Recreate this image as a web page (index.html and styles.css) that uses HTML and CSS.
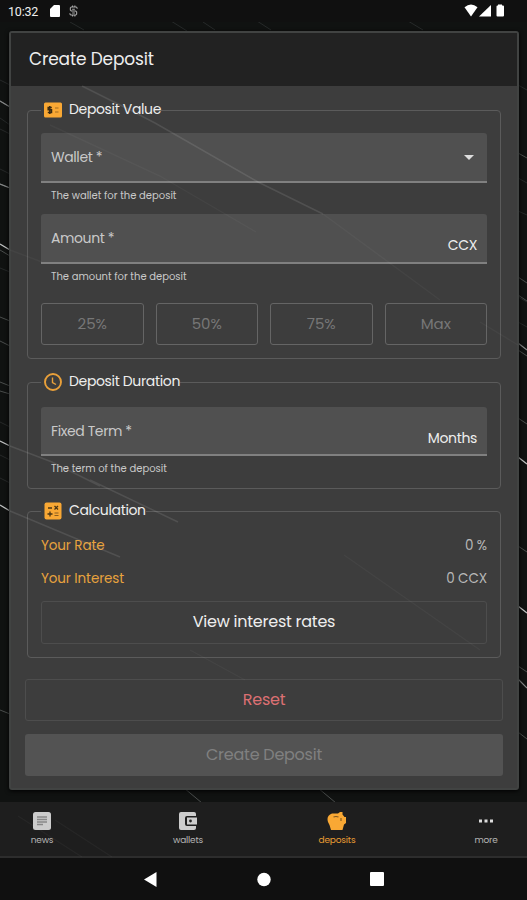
FILE: index.html
```html
<!DOCTYPE html>
<html lang="en">
<head>
    <meta charset="UTF-8">
    <meta name="viewport" content="width=device-width, initial-scale=1.0">
    <title>Create Deposit</title>
    <link rel="stylesheet" href="styles.css">
</head>
<body>
    <div class="screen">
        <!-- Background streaks -->
        <svg class="streaks" viewBox="0 0 527 900" fill="none" stroke="#4a4d4c">
            <path stroke="#262929" d="M70 22l14 8M171 21l16 10M203 22l12 8M257 21l14 9M408 21l15 9M0 80l10 5M0 118l10 7M0 129l10 5M0 169l10 5M0 268l10 4M0 422l10 5M0 455l10 5M0 478l10 5M518 85l9 5M518 178l9 5M518 211l9 4M518 297l9 5M518 322l9 5"/>
            <path d="M0 101l10 6M0 184l10 4M0 250l10 6M0 317l10 4M0 341l10 5M0 382l10 4M0 391l10 3M0 710l10 4M518 153l9 5M518 277l9 6M518 295l9 6M518 350l9 6M518 418l9 6M518 546l9 6M518 666l9 6M518 732l9 7M184 788l18 15M318 788l18 15"/>
            <path stroke="#c0c2c2" stroke-width="1.3" d="M0 244l10 6M0 441l10 5M0 505l10 6M518 457l9 7M518 606l9 7"/>
            <path stroke="#858787" stroke-width="1.2" d="M0 184l10 4M0 101l10 6M518 343l9 7M518 679l9 9"/>
        </svg>

        <div class="status-bar">
            <span class="clock">10:32</span>
            <svg class="sd-icon" viewBox="0 0 10 12"><path d="M4 0h5q1 0 1 1v10q0 1-1 1H1q-1 0-1-1V4z" fill="#fff"/></svg>
            <svg class="s-icon" viewBox="0 0 10 12" fill="none" stroke="#aaa" stroke-width="1.200"><path d="M9 3.500V2.500L8 1.500H2.500L1.500 2.500V5l1 1h5l1 1v2.500l-1 1H2L1 9.500V8.500M4 0v1.500M6.500 0v1.500M4 10.500V12M6.500 10.500V12M3.500 4h3M3.500 8.300h3"/></svg>
            <svg class="signal-icons" viewBox="0 0 41 13" fill="#fff">
                <path d="M.5 3.200Q7 -2 13.500 3.200L7 12.500z"/>
                <path d="M15 12.500L27 1v11.500z"/>
                <path d="M34 .5h4v1h1q1 0 1 1v9q0 1-1 1h-5.500q-1 0-1-1v-9q0-1 1-1h.5z"/>
            </svg>
        </div>

        <div class="card">
            <h1 class="card-title">Create Deposit</h1>

            <div class="card-body">
                <fieldset class="group">
                    <legend>
                        <svg viewBox="0 0 18 18"><rect y="1.500" width="18" height="15" rx="1.500" fill="#f9a834"/><path d="M7.800 6.500H4.200v2.300h3.300v2.700H3.800M5.800 5v8" fill="none" stroke="#3a2a12" stroke-width="1.500"/><path d="M11 7h3.500M11 11h3.500" stroke="#a06a20" stroke-width="1.200"/></svg>
                        <span>Deposit Value</span>
                    </legend>
                    <div class="field">
                        <span class="label">Wallet *</span>
                        <svg class="arrow" viewBox="0 0 10 5"><path d="M0 0h10L5 5z" fill="#ddd"/></svg>
                    </div>
                    <p class="hint">The wallet for the deposit</p>
                    <div class="field">
                        <span class="label">Amount *</span>
                        <span class="suffix">CCX</span>
                    </div>
                    <p class="hint">The amount for the deposit</p>
                    <div class="percents">
                        <button class="outlined">25%</button>
                        <button class="outlined">50%</button>
                        <button class="outlined">75%</button>
                        <button class="outlined">Max</button>
                    </div>
                </fieldset>

                <fieldset class="group duration">
                    <legend>
                        <svg viewBox="0 0 18 18" fill="none" stroke="#e9a03a"><circle cx="9" cy="9" r="8" stroke-width="1.900"/><path d="M8.500 4.500v5l3.500 2" stroke-width="1.400"/></svg>
                        <span>Deposit Duration</span>
                    </legend>
                    <div class="field">
                        <span class="label">Fixed Term *</span>
                        <span class="suffix">Months</span>
                    </div>
                    <p class="hint">The term of the deposit</p>
                </fieldset>

                <fieldset class="group calculation">
                    <legend>
                        <svg viewBox="0 0 18 18"><rect x=".5" y=".5" width="17" height="17" rx="2" fill="#f9a834"/><path d="M4 6h4M10.500 7.500l3.500-3.500M10.500 4l3.500 3.500M6 9.500v5M3.500 12h5" fill="none" stroke="#4a3515" stroke-width="1.300"/><path d="M10.500 11h4M10.500 13.500h4" stroke="#8a5c20" stroke-width="1.200"/></svg>
                        <span>Calculation</span>
                    </legend>
                    <div class="row"><span class="name">Your Rate</span><span>0 %</span></div>
                    <div class="row"><span class="name">Your Interest</span><span>0 CCX</span></div>
                    <button class="rates">View interest rates</button>
                </fieldset>

                <button class="reset">Reset</button>
                <button class="create" disabled>Create Deposit</button>
            </div>
        </div>

        <div class="tabs">
            <div class="tab">
                <svg viewBox="0 0 18 18"><rect width="18" height="18" rx="2.500" fill="#ccc"/><path d="M4 5h10M4 7.500h10M4 10h10M4 12.500h6" stroke="#888" stroke-width="1.700"/></svg>
                <span>news</span>
            </div>
            <div class="tab wallets">
                <svg viewBox="0 0 18 18"><path d="M2 0h13q2 0 2 2v2H8q-2 0-2 2v6q0 2 2 2h9v2q0 2-2 2H2q-2 0-2-2V2q0-2 2-2z" fill="#ccc"/><path d="M8 5.500h10v7H8z" fill="#ccc"/><circle cx="11.500" cy="9" r="1.400" fill="#222"/></svg>
                <span>wallets</span>
            </div>
            <div class="tab deposits">
                <svg viewBox="0 0 20 18"><path d="M5 1.500h6L13 0h2.500v2.500L17.500 5H19v6l-2 1.500L15.500 18H4L2.500 13 1 10Q-1 3.500 5 1.500z" fill="#f9a834"/><path d="M6.500 5q2.500-1 5 0" fill="none" stroke="#7a5520" stroke-width="1.100"/><path d="M14 6v3" stroke="#7a5520" stroke-width="1.100"/></svg>
                <span>deposits</span>
            </div>
            <div class="tab more">
                <svg viewBox="0 0 18 18" fill="#ddd"><path d="M2 7.500h3v3H2zM7.500 7.500h3v3h-3zM13 7.500h3v3h-3z"/></svg>
                <span>more</span>
            </div>
        </div>

        <div class="system-nav">
            <svg viewBox="0 0 240 16" fill="#fff"><path d="M0 7.500L12.500 0v15z"/><circle cx="120" cy="7.500" r="6.700"/><rect x="226" y="0" width="14" height="14" rx="1"/></svg>
        </div>

        <!-- Faint streaks over the card and the tabs -->
        <svg class="streaks" viewBox="0 0 527 900" fill="none" stroke="#fff">
            <path stroke-opacity=".1" stroke-width="1.500" d="M82 86L132 111L155 123L258 182L323 214M10 446L52 462L100 486M90 480L178 522M10 511L120 557"/>
            <path stroke-opacity=".035" stroke-width="1.400" d="M50 125L160 176L256 232M10 250L42 262M323 214L440 300M480 322L518 345M344 555L480 650M18 816L82 857M55 820L112 857M190 650L245 680"/>
        </svg>
    </div>
</body>
</html>
```
FILE: styles.css
```css
* {
    box-sizing: border-box;
}

body {
    margin: 0;
    background-color: #101211;
    color: #eee;
    font-family: Poppins, Inter, sans-serif;
}

button {
    font-family: inherit;
    background: none;
    padding: 0 0 2px;
    border-radius: 3px;
}

.screen {
    position: relative;
    width: 527px;
    height: 900px;
    overflow: hidden;
    display: flex;
    flex-direction: column;
}

.streaks {
    position: absolute;
    top: 0;
    left: 0;
    width: 527px;
    height: 900px;
    pointer-events: none;
}

/* Status bar */
.status-bar {
    position: relative;
    height: 22px;
    flex: none;
    display: flex;
    align-items: center;
    padding: 0 22px 0 8px;
    background-color: #101010;
}

.clock {
    width: 42px;
    font-family: Roboto, sans-serif;
    font-size: 12.5px;
    letter-spacing: -0.2px;
}

.sd-icon {
    width: 10px;
    height: 12px;
}

.s-icon {
    width: 9px;
    height: 12px;
    margin-left: 9px;
}

.signal-icons {
    width: 41px;
    height: 13px;
    margin-left: auto;
    margin-right: 0;
    margin-top: -1px;
}

/* Card */
.card {
    position: relative;
    flex: none;
    width: 510px;
    height: 759px;
    margin: 9px 0 12px 9px;
    background-color: #3d3d3d;
    border: 2px solid #414342;
    border-radius: 3px;
    box-shadow: 0 1px 4px #000;
}

.card-title {
    height: 53px;
    margin: 0;
    padding-left: 18px;
    background-color: #222;
    font-size: 17px;
    font-weight: 400;
    line-height: 53px;
    letter-spacing: -0.15px;
}

.card-body {
    padding: 13px 14px 0;
}

.group {
    min-width: 0;
    margin: 0 2px;
    padding: 12px 13px 13px;
    border: 1px solid #5b5b5b;
    border-radius: 4px;
}

legend {
    display: flex;
    align-items: center;
    height: 22px;
    padding: 0 0 0 3px;
    font-size: 14px;
    letter-spacing: -0.35px;
    line-height: 20px;
}

legend span {
    padding-bottom: 2px;
}

legend svg {
    width: 18px;
    height: 18px;
    margin-right: 7px;
}

.duration {
    margin-top: 12px;
    padding: 14px 13px 0;
}

.calculation {
    margin-top: 11px;
    padding-top: 7px;
}

.field {
    display: flex;
    justify-content: space-between;
    height: 50px;
    padding: 0 10px;
    background-color: #505050;
    border-bottom: 2px solid #808080;
    border-radius: 3px 3px 0 0;
}

.duration .field {
    height: 49px;
}

.label {
    color: #c9c9c9;
    font-size: 14px;
    letter-spacing: -0.4px;
    line-height: 49px;
}

.suffix {
    font-size: 14px;
    letter-spacing: -0.35px;
    line-height: 62px;
}

.arrow {
    width: 10px;
    height: 5px;
    margin: 22px 3px 0 0;
}

.hint {
    height: 31px;
    margin: 0;
    padding-left: 10px;
    color: #c9c9c9;
    font-size: 10px;
    line-height: 25px;
}

.duration .hint {
    height: 32px;
}

.percents {
    display: grid;
    grid-template-columns: repeat(4, 1fr);
    gap: 12px;
    margin-top: 8px;
}

.outlined {
    height: 42px;
    border: 1px solid #656565;
    color: #777;
    font-size: 15px;
}

.row {
    display: flex;
    justify-content: space-between;
    height: 33px;
    color: #b8b8b8;
    font-size: 13.5px;
    letter-spacing: -0.1px;
    line-height: 33px;
}

.name {
    color: #e8a33d;
}

.rates,
.reset,
.create {
    display: block;
    width: 100%;
    height: 42px;
    border: 1px solid #4d4d4d;
    font-size: 16px;
    letter-spacing: -0.25px;
}

.rates {
    height: 43px;
    margin-top: 6px;
    color: #eee;
}

.reset {
    margin-top: 21px;
    color: #dc7073;
}

.create {
    margin-top: 13px;
    border: none;
    background-color: #535353;
    color: #808080;
}

/* Bottom tabs */
.tabs {
    position: relative;
    height: 56px;
    flex: none;
    display: flex;
    justify-content: space-between;
    padding: 10px 11px 0 12px;
    background-color: #1e1e1e;
    border-bottom: 2px solid #2d2d2d;
}

.tab {
    display: flex;
    flex-direction: column;
    align-items: center;
    width: 60px;
    color: #b5b5b5;
    font-size: 9px;
    letter-spacing: -0.2px;
    line-height: 20px;
}

.tab svg {
    width: 18px;
    height: 18px;
}

.tab.wallets {
    margin-left: -3px;
}

.tab.deposits {
    color: #e89c33;
}

.tab.deposits svg {
    width: 20px;
}

.system-nav {
    position: relative;
    flex: 1;
    padding: 14px 0 0 144px;
    background-color: #101010;
}

.system-nav svg {
    width: 240px;
    height: 16px;
    display: block;
}
```
